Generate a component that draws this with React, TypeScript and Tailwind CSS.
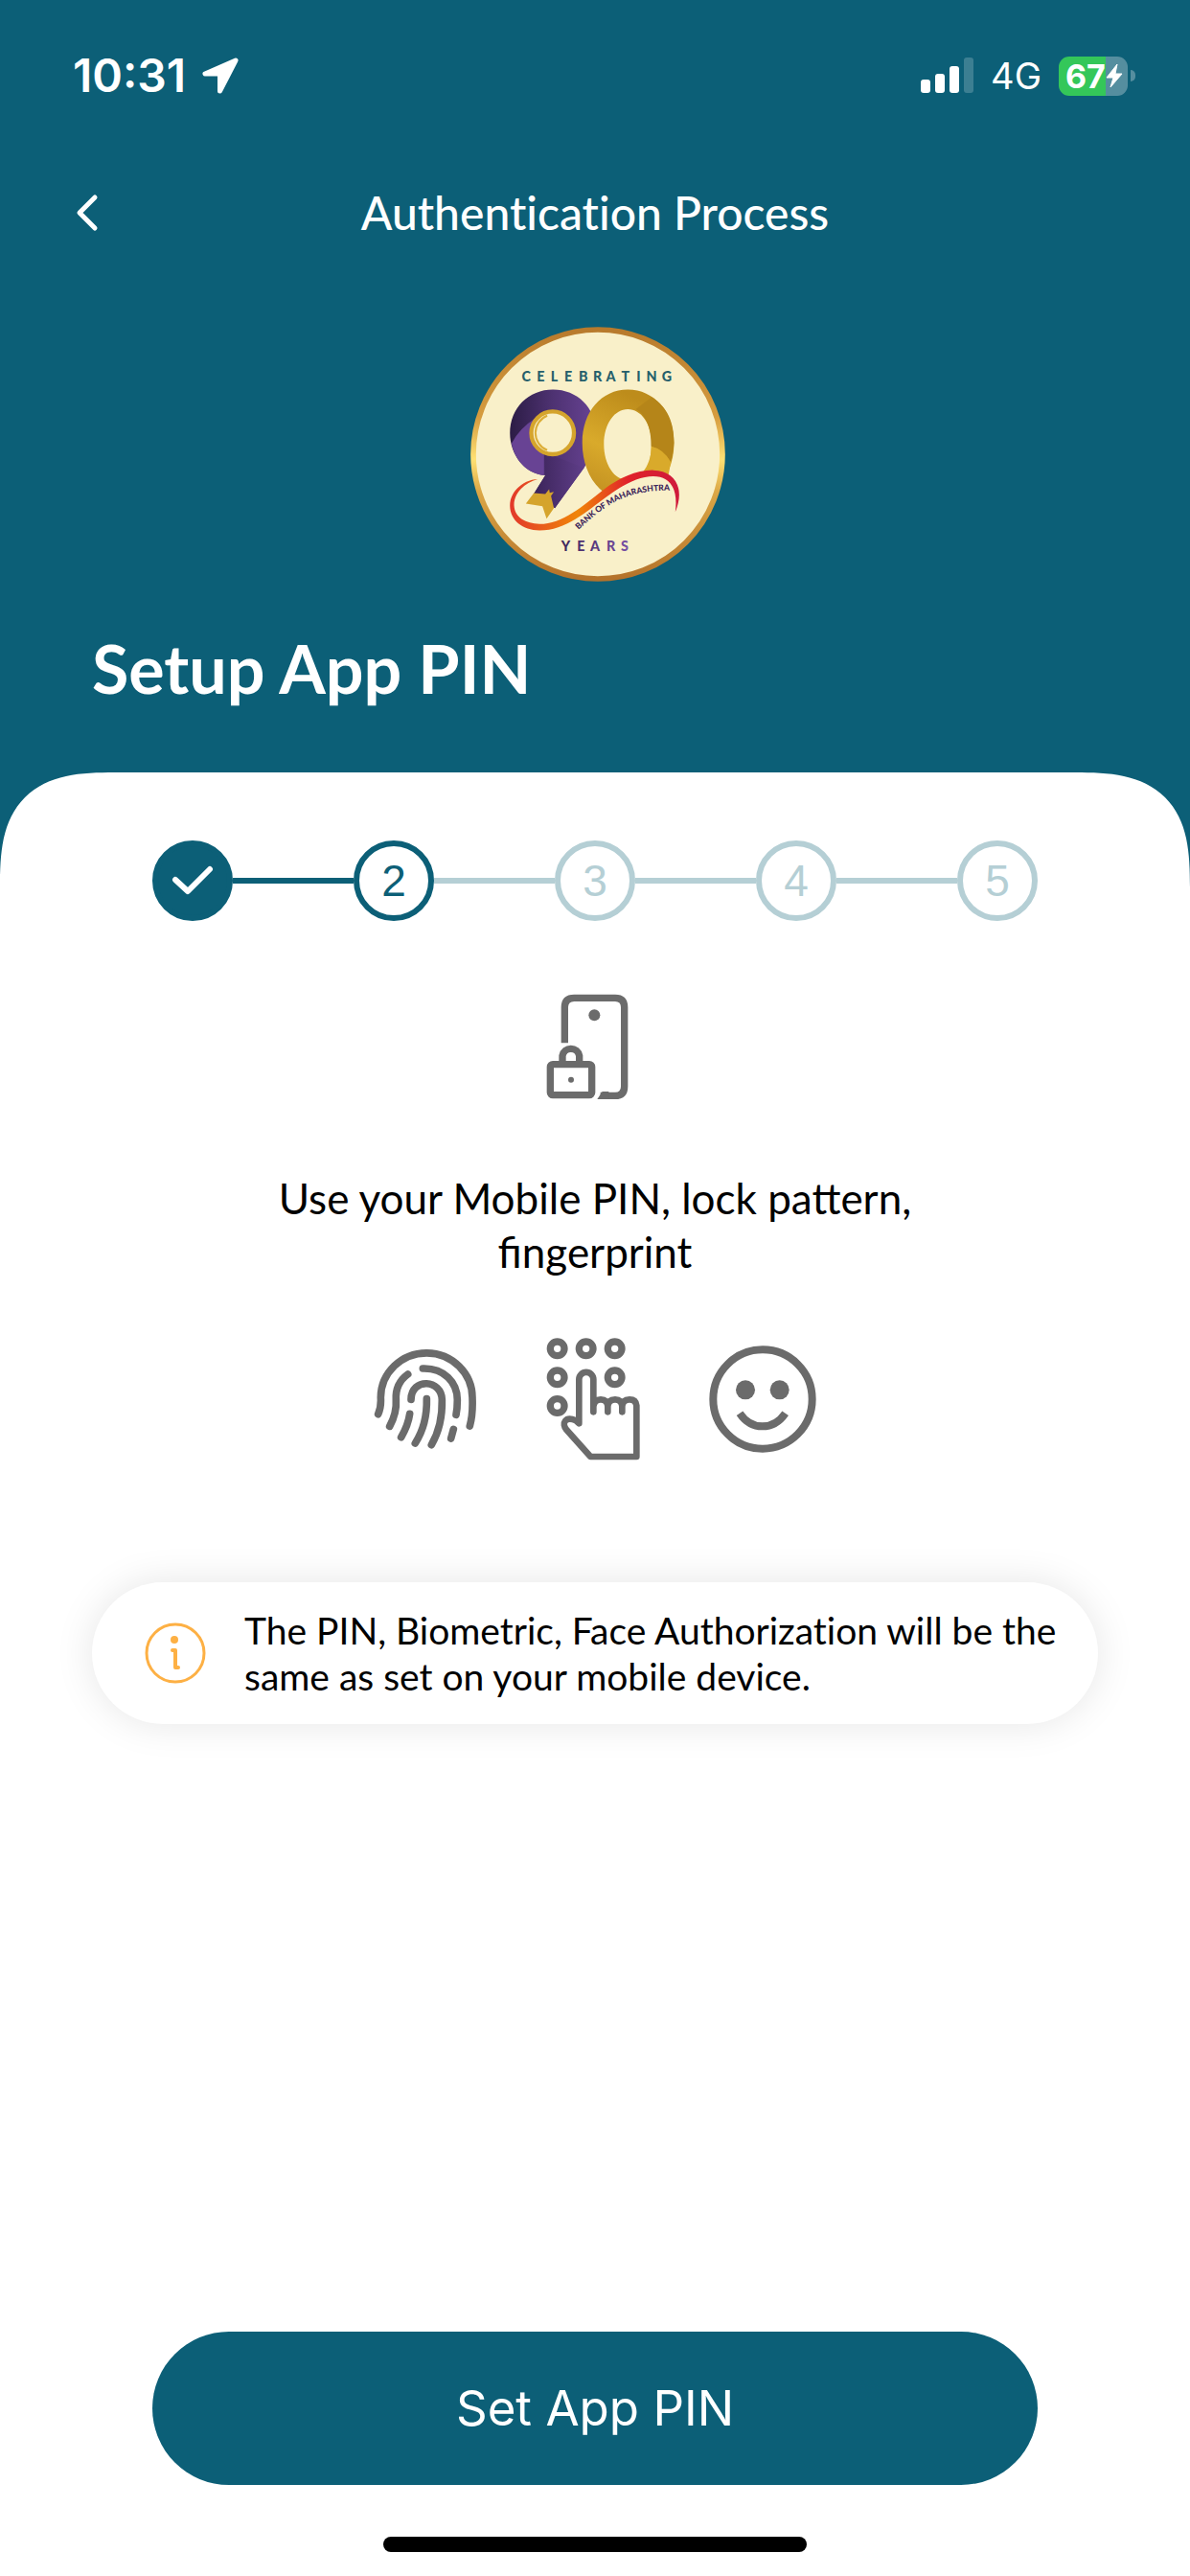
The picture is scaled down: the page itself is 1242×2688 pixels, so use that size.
import { Fragment } from 'react';
import clsx from 'clsx';

type StepState = 'done' | 'current' | 'upcoming';

interface Step {
  id: number;
  state: StepState;
}

const steps: Step[] = [
  { id: 1, state: 'done' },
  { id: 2, state: 'current' },
  { id: 3, state: 'upcoming' },
  { id: 4, state: 'upcoming' },
  { id: 5, state: 'upcoming' },
];

const StatusBar = () => (
  <div className="flex items-center justify-between pt-[46px] pr-[57px] pl-[76px] font-['Inter',sans-serif]">
    <div className="flex items-center gap-4">
      <span className="text-[48px] leading-[66px] font-semibold">10:31</span>
      <svg className="size-[40px]" viewBox="0 0 40 40" fill="currentColor" aria-hidden="true">
        <path
          d="M36 4 4 18h15.500V36z"
          stroke="currentColor"
          strokeWidth="5"
          strokeLinejoin="round"
        />
      </svg>
    </div>
    <div className="flex items-center gap-[18px]">
      <svg className="h-[38px] w-[55px]" viewBox="0 0 55 38" fill="currentColor" aria-hidden="true">
        <rect x="0" y="23" width="10" height="14" rx="3" />
        <rect x="15" y="17" width="10" height="20" rx="3" />
        <rect x="30" y="9" width="10" height="28" rx="3" />
        <rect x="45" y="0" width="10" height="37" rx="3" opacity="0.2" />
      </svg>
      <span className="text-[38px] leading-[66px]">4G</span>
      <div className="flex items-center gap-[3px]" role="img" aria-label="Battery 67%, charging">
        <div className="flex h-[41px] w-[72px] items-center rounded-[11px] bg-linear-to-r from-[#34c759] from-68% to-[#558e9f] to-68% pl-[7px]">
          <span className="text-[34px] leading-[41px] font-bold">67</span>
          <svg className="h-[28px] w-[18px] shrink-0" viewBox="0 0 18 28" fill="currentColor" aria-hidden="true">
            <path d="M12 2 1 16h7L5 26 17 12h-7z" stroke="currentColor" strokeLinejoin="round" />
          </svg>
        </div>
        <div className="h-[12px] w-[5px] rounded-r-full bg-[#558e9f]" />
      </div>
    </div>
  </div>
);

const AnniversaryLogo = () => (
  <svg
    className="h-[266px] w-[272px]"
    viewBox="13 31 818 800"
    role="img"
    aria-label="Celebrating 90 years, Bank of Maharashtra"
    fontFamily="Lato, sans-serif"
  >
    <defs>
      <linearGradient id="rim" x1="0" y1="0" x2="0" y2="1">
        <stop offset="0" stopColor="#b87a2c" />
        <stop offset="0.35" stopColor="#d59c3f" />
        <stop offset="0.52" stopColor="#ffe173" />
        <stop offset="0.65" stopColor="#dba746" />
        <stop offset="1" stopColor="#b4722a" />
      </linearGradient>
      <linearGradient id="purple" x1="0" y1="0" x2="1" y2="0">
        <stop offset="0" stopColor="#2c1c45" />
        <stop offset="0.5" stopColor="#4e3272" />
        <stop offset="1" stopColor="#684394" />
      </linearGradient>
      <linearGradient id="tail" x1="0" y1="0" x2="1" y2="0">
        <stop offset="0" stopColor="#3b2459" />
        <stop offset="1" stopColor="#5f3e89" />
      </linearGradient>
      <linearGradient id="gold" x1="0" y1="1" x2="0.4" y2="0">
        <stop offset="0" stopColor="#bd8a1f" />
        <stop offset="0.5" stopColor="#d9aa2b" />
        <stop offset="1" stopColor="#bd8c1b" />
      </linearGradient>
      <linearGradient id="swoosh" x1="0" y1="0" x2="1" y2="0">
        <stop offset="0" stopColor="#e2382b" />
        <stop offset="0.4" stopColor="#f08508" />
        <stop offset="0.7" stopColor="#e0222a" />
        <stop offset="1" stopColor="#cf1a3b" />
      </linearGradient>
      <linearGradient id="years" x1="0" y1="0" x2="1" y2="0">
        <stop offset="0" stopColor="#3b2459" />
        <stop offset="1" stopColor="#7850a5" />
      </linearGradient>
      <clipPath id="above-swoosh">
        <path d="M380 200H700V530Q640 475 570 492Q500 510 437 556L380 520z" />
      </clipPath>
      <path id="bank-curve" d="M370 668C455 590 520 540 670 545" />
    </defs>

    <circle cx="431" cy="431" r="391" fill="#f9f0c9" stroke="url(#rim)" strokeWidth="17" />

    <text
      x="192 239 283 326 371 416 457 505 552 583 632"
      y="202"
      fontSize="43"
      fontWeight="900"
      fill="#265f6c"
    >
      CELEBRATING
    </text>

    {/* nine */}
    <path
      d="M290 228C366 228 425 284 425 365C425 405 412 440 388 473L296 600L230 555L266 497C200 494 155 430 155 365C155 285 214 228 290 228z"
      fill="url(#purple)"
    />
    <path d="M160 397Q185 350 232 320L262 430V497C200 490 168 440 160 397z" fill="#684394" />
    <path d="M262 425L388 473L296 600L230 555L266 497z" fill="url(#tail)" />
    <circle cx="289" cy="364" r="67" fill="#f9f0c9" stroke="#d5a42c" strokeWidth="13" />
    <path d="M272 310A58 58 0 0 0 272 418" fill="none" stroke="#dcae38" strokeWidth="6" />
    <path d="M205 586 230 553 266 556 278 541 280 552 293 549 284 562 293 600 270 633 257 594z" fill="#d5a42c" />

    {/* zero */}
    <g clipPath="url(#above-swoosh)">
      <path
        fillRule="evenodd"
        d="M525 228C608 228 670 298 670 395C670 495 610 575 525 575C440 575 382 495 382 395C382 298 442 228 525 228zM525 290C484 290 450 335 450 400C450 462 482 512 525 512C566 512 600 462 600 400C600 335 566 290 525 290z"
        fill="url(#gold)"
      />
      <path d="M550 290L600 252C650 282 670 332 670 395Q668 430 660 456Q638 415 598 406C600 350 580 305 550 290z" fill="#b58519" />
      <path d="M598 406Q638 415 660 456L650 510H580Q598 450 598 406z" fill="#d9aa2b" />
    </g>

    <path
      d="M242 509C200 510 155 545 155 592C155 638 195 670 248 670C330 670 395 610 460 563C510 526 560 500 605 500C655 500 684 535 674 612C705 540 675 482 605 481C550 480 490 510 445 545C385 592 320 650 248 650C205 648 170 630 168 592C166 555 200 520 242 509z"
      fill="url(#swoosh)"
    />
    <text fontSize="26" fontWeight="900" fill="#3b2459">
      <textPath href="#bank-curve">BANK OF MAHARASHTRA</textPath>
    </text>
    <text x="316 366 407 458 503" y="736" fontSize="43" fontWeight="900" fill="url(#years)">
      YEARS
    </text>
  </svg>
);

const StepCircle = ({ step }: { step: Step }) => (
  <li
    aria-current={step.state === 'current' ? 'step' : undefined}
    className={clsx(
      "flex size-[84px] shrink-0 items-center justify-center rounded-full border-6 font-['Liberation_Sans',sans-serif] text-[46px] leading-none",
      step.state === 'done' && 'border-[#0c5f77] bg-[#0c5f77] text-white',
      step.state === 'current' && 'border-[#0c5f77] text-[#0c5f77]',
      step.state === 'upcoming' && 'border-[#b5cfd5] text-[#b5cfd5]',
    )}
  >
    {step.state === 'done' ? (
      <svg className="h-[32px] w-[44px]" viewBox="0 0 44 32" fill="none" role="img" aria-label="Step 1 done">
        <path d="M4 15l13 12L40 4" stroke="currentColor" strokeWidth="6" strokeLinecap="round" strokeLinejoin="round" />
      </svg>
    ) : (
      step.id
    )}
  </li>
);

const Stepper = () => (
  <ol className="flex items-center px-[159px]">
    {steps.map((step, index) => (
      <Fragment key={step.id}>
        {index > 0 && (
          <li
            aria-hidden="true"
            className={clsx('h-[6px] flex-1', step.state === 'current' ? 'bg-[#0c5f77]' : 'bg-[#b5cfd5]')}
          />
        )}
        <StepCircle step={step} />
      </Fragment>
    ))}
  </ol>
);

const PhoneLockIcon = () => (
  <svg className="h-[112px] w-[102px]" viewBox="92 50 306 336" fill="none" stroke="#6b6b6b" strokeWidth="22" aria-hidden="true">
    <path d="M150 204V92Q150 63 180 63H308Q337 63 337 92V340Q337 369 308 369H262" />
    <path d="M252 380l16-24h20v24z" fill="#6b6b6b" stroke="none" />
    <circle cx="243" cy="117" r="18" fill="#6b6b6b" stroke="none" />
    <path d="M143 266V244a27 27 0 0 1 53 0V266" />
    <rect x="105" y="271" width="130" height="96" rx="8" />
    <circle cx="170" cy="319" r="9" fill="#6b6b6b" stroke="none" />
  </svg>
);

const FingerprintIcon = () => (
  <svg
    className="h-[106px] w-[108px]"
    viewBox="62 84 324 318"
    fill="none"
    stroke="#6b6b6b"
    strokeWidth="23"
    strokeLinecap="round"
    aria-hidden="true"
  >
    <path d="M76 290Q86 268 84 238A143 140 0 0 1 371 240Q373 290 363 327" />
    <path d="M169 165Q129 194 132 245Q135 285 112 328" />
    <path d="M216 147C282 145 324 190 324 245Q324 272 320 292" />
    <path d="M179 244C180 175 275 180 276 245Q278 325 243 386" />
    <path d="M228 242Q230 322 192 381" />
    <path d="M175 289Q170 325 148 362" />
    <path d="M312 337L304 366" />
  </svg>
);

const PatternIcon = () => (
  <svg className="h-[128px] w-[98px]" viewBox="65 50 294 384" fill="none" stroke="#6b6b6b" aria-hidden="true">
    <g strokeWidth="22">
      <circle cx="100" cy="84" r="22" />
      <circle cx="190" cy="84" r="22" />
      <circle cx="280" cy="84" r="22" />
      <circle cx="100" cy="174" r="22" />
      <circle cx="280" cy="174" r="22" />
      <circle cx="100" cy="263" r="22" />
    </g>
    <path
      d="M213 282V180a22 22 0 0 0-45 0V318L158 309C125 294 112 318 129 338L204 422H348V262Q346 243 326 243Q304 243 303 265V282V265Q302 243 281 243Q259 243 258 265V282V265Q257 243 236 243Q215 243 213 265"
      strokeWidth="20"
      strokeLinecap="round"
      strokeLinejoin="round"
    />
  </svg>
);

const SmileyIcon = () => (
  <svg className="size-[112px]" viewBox="571 73 336 336" fill="none" stroke="#6b6b6b" strokeWidth="24" aria-hidden="true">
    <circle cx="739" cy="241" r="155" />
    <circle cx="685" cy="212" r="30" fill="#6b6b6b" stroke="none" />
    <circle cx="792" cy="212" r="30" fill="#6b6b6b" stroke="none" />
    <path d="M667 285Q695 326 738 326Q782 326 810 285" />
  </svg>
);

const InfoIcon = () => (
  <svg className="size-[64px] shrink-0" viewBox="0 0 64 64" fill="none" stroke="#fdb044" aria-hidden="true">
    <circle cx="32" cy="32" r="30" strokeWidth="3" />
    <circle cx="31" cy="18" r="4" fill="#fdb044" stroke="none" />
    <path d="M29 29h3v18h3" strokeWidth="4" strokeLinecap="round" strokeLinejoin="round" />
  </svg>
);

export default function App() {
  return (
    <div className="flex min-h-screen flex-col bg-[#0c5f77] font-['Lato',sans-serif] text-white">
      <StatusBar />

      <header className="grid grid-cols-[1fr_auto_1fr] items-center px-[76px] pt-[80px]">
        <button type="button" aria-label="Back" className="w-[40px]">
          <svg className="h-[40px] w-[28px]" viewBox="0 0 28 40" fill="none" aria-hidden="true">
            <path d="M23 4L7 20l16 16" stroke="currentColor" strokeWidth="5" strokeLinecap="round" strokeLinejoin="round" />
          </svg>
        </button>
        <h1 className="text-[48px] leading-[60px] font-medium [font-variant-ligatures:none]">Authentication Process</h1>
      </header>

      <div className="flex justify-center pt-[89px]">
        <AnniversaryLogo />
      </div>

      <h2 className="px-[96px] pt-[46px] pb-[65px] text-[70px] leading-[88px] font-bold">Setup App PIN</h2>

      <main className="flex flex-1 flex-col rounded-t-[120px] bg-white pt-[71px] text-black [corner-shape:superellipse(1.5)]">
        <Stepper />

        <section className="flex flex-col items-center pt-[76px]">
          <PhoneLockIcon />
          <p className="max-w-[720px] pt-[73px] text-center text-[44px] leading-[56px]">
            Use your Mobile PIN, lock pattern, fingerprint
          </p>
          <div className="flex items-center gap-[72px] pt-[62px]">
            <FingerprintIcon />
            <PatternIcon />
            <SmileyIcon />
          </div>
        </section>

        <div className="mx-[96px] mt-[127px] flex items-center gap-[40px] rounded-full bg-white py-[26px] pr-[40px] pl-[55px] shadow-[0_0_40px_rgba(0,0,0,0.1)]">
          <InfoIcon />
          <p className="text-[39px] leading-[48px] [font-variant-ligatures:none]">
            The PIN, Biometric, Face Authorization will be the same as set on your mobile device.
          </p>
        </div>

        <div className="mt-auto px-[159px]">
          <button
            type="button"
            className="w-full rounded-full bg-[#0c5f77] py-[44px] font-['Inter',sans-serif] text-[51px] leading-[72px] text-white"
          >
            Set App PIN
          </button>
        </div>

        <div className="mx-auto mt-[54px] mb-[25px] h-[16px] w-[442px] rounded-full bg-black" />
      </main>
    </div>
  );
}
